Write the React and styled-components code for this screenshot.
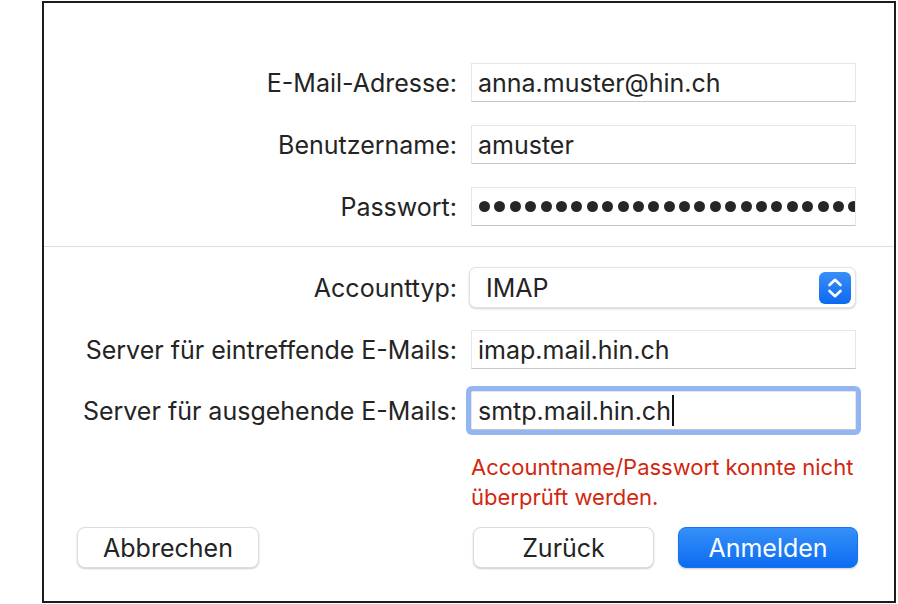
import styled, { createGlobalStyle } from "styled-components";

const GlobalStyle = createGlobalStyle`
    html, body {
        margin: 0;
        background: #fff;
    }
    body {
        font-family: Inter, "Liberation Sans", sans-serif;
        color: #242424;
    }
`;

const Page = styled.div`
    padding: 1px 0 0 42px;
`;

// Dialog-Rahmen
const Window = styled.div`
    width: 854px;
    height: 602px;
    box-sizing: border-box;
    border: 2px solid #1c1c1c;
    display: flex;
    flex-direction: column;
`;

const FormSection = styled.div`
    display: grid;
    grid-template-columns: 1fr 385px;
    column-gap: 14px;
    row-gap: ${({ gap }) => gap}px;
    align-items: center;
    padding: ${({ top }) => top}px 38px ${({ bottom }) => bottom}px 0;
`;

const Label = styled.label`
    text-align: right;
    font-size: 25px;
    white-space: nowrap;
`;

const Field = styled.div`
    position: relative;
    height: 39px;
    box-sizing: border-box;
    padding: 0 6px;
    display: flex;
    align-items: center;
    font-size: 25px;
    background: #fff;
    border: 1px solid #e6e6e6;
    border-bottom-color: #c6c6c6;
    white-space: nowrap;
    box-shadow: ${({ focused }) => (focused ? "0 0 0 5px #93b6f2" : "none")};
    border-radius: ${({ focused }) => (focused ? "2px" : "0")};
    overflow: ${({ focused }) => (focused ? "visible" : "hidden")};
`;

const Caret = styled.span`
    display: inline-block;
    width: 2px;
    height: 31px;
    background: #111;
    margin-left: 1px;
`;

const Dots = styled.div`
    display: flex;
    gap: 4.4px;
    overflow: hidden;
    flex: 1;
    margin: 0 -6px 0 1px;
`;

const Dot = styled.span`
    flex: none;
    width: 11px;
    height: 11px;
    border-radius: 50%;
    background: #262626;
`;

const Divider = styled.div`
    height: 1px;
    background: #dedede;
`;

// Popup-Auswahl
const Select = styled.div`
    height: 41px;
    box-sizing: border-box;
    margin-left: -2px;
    padding: 0 4px 0 16px;
    display: flex;
    align-items: center;
    justify-content: space-between;
    font-size: 25px;
    background: #fff;
    border: 1px solid #e2e2e2;
    border-radius: 7px;
    box-shadow: 0 1px 2px rgba(0, 0, 0, 0.18);
`;

const Stepper = styled.span`
    width: 32px;
    height: 32px;
    border-radius: 6px;
    background: linear-gradient(#3b8ef9, #0c69f0);
    display: flex;
    align-items: center;
    justify-content: center;
`;

const ErrorText = styled.div`
    grid-column: 2;
    color: #d2270f;
    font-size: 22px;
    line-height: 30px;
    white-space: nowrap;
`;

const ButtonBar = styled.div`
    display: flex;
    justify-content: space-between;
    align-items: center;
    padding: 0 36px 0 33px;
    margin-top: 15px;
`;

const ButtonGroup = styled.div`
    display: flex;
    gap: 24px;
`;

const Button = styled.button`
    width: ${({ w }) => w || 181}px;
    height: 41px;
    padding: 0;
    border-radius: 8px;
    font-family: inherit;
    font-size: 25px;
    cursor: pointer;
    color: ${({ primary }) => (primary ? "#fff" : "#242424")};
    background: ${({ primary }) => (primary ? "linear-gradient(#3690f8, #0b6cf1)" : "#fff")};
    border: 1px solid ${({ primary }) => (primary ? "#1a72f0" : "#dcdcdc")};
    box-shadow: 0 1px 2px rgba(0, 0, 0, 0.2);
`;

function StepperIcon() {
    return (
        <svg width="32" height="32" viewBox="0 0 32 32">
            <polyline points="10.5,13 16,7.8 21.5,13" fill="none" stroke="#fff" strokeWidth="2.6" strokeLinecap="round" strokeLinejoin="round" />
            <polyline points="10.5,19 16,24.2 21.5,19" fill="none" stroke="#fff" strokeWidth="2.6" strokeLinecap="round" strokeLinejoin="round" />
        </svg>
    );
}

export default function App() {
    return (
        <Page>
            <GlobalStyle />
            <Window>
                <FormSection top={60} bottom={20} gap={23}>
                    <Label>E-Mail-Adresse:</Label>
                    <Field>anna.muster@hin.ch</Field>
                    <Label>Benutzername:</Label>
                    <Field>amuster</Field>
                    <Label>Passwort:</Label>
                    <Field>
                        <Dots>
                            {Array.from({ length: 26 }).map((_, i) => (
                                <Dot key={i} />
                            ))}
                        </Dots>
                    </Field>
                </FormSection>

                <Divider />

                <FormSection top={20} bottom={0} gap={22}>
                    <Label>Accounttyp:</Label>
                    <Select>
                        IMAP
                        <Stepper>
                            <StepperIcon />
                        </Stepper>
                    </Select>
                    <Label>Server für eintreffende E-Mails:</Label>
                    <Field>imap.mail.hin.ch</Field>
                    <Label>Server für ausgehende E-Mails:</Label>
                    <Field focused>
                        smtp.mail.hin.ch
                        <Caret />
                    </Field>
                    <ErrorText>
                        Accountname/Passwort konnte nicht
                        <br />
                        überprüft werden.
                    </ErrorText>
                </FormSection>

                <ButtonBar>
                    <Button w={182}>Abbrechen</Button>
                    <ButtonGroup>
                        <Button>Zurück</Button>
                        <Button primary w={180}>Anmelden</Button>
                    </ButtonGroup>
                </ButtonBar>
            </Window>
        </Page>
    );
}
